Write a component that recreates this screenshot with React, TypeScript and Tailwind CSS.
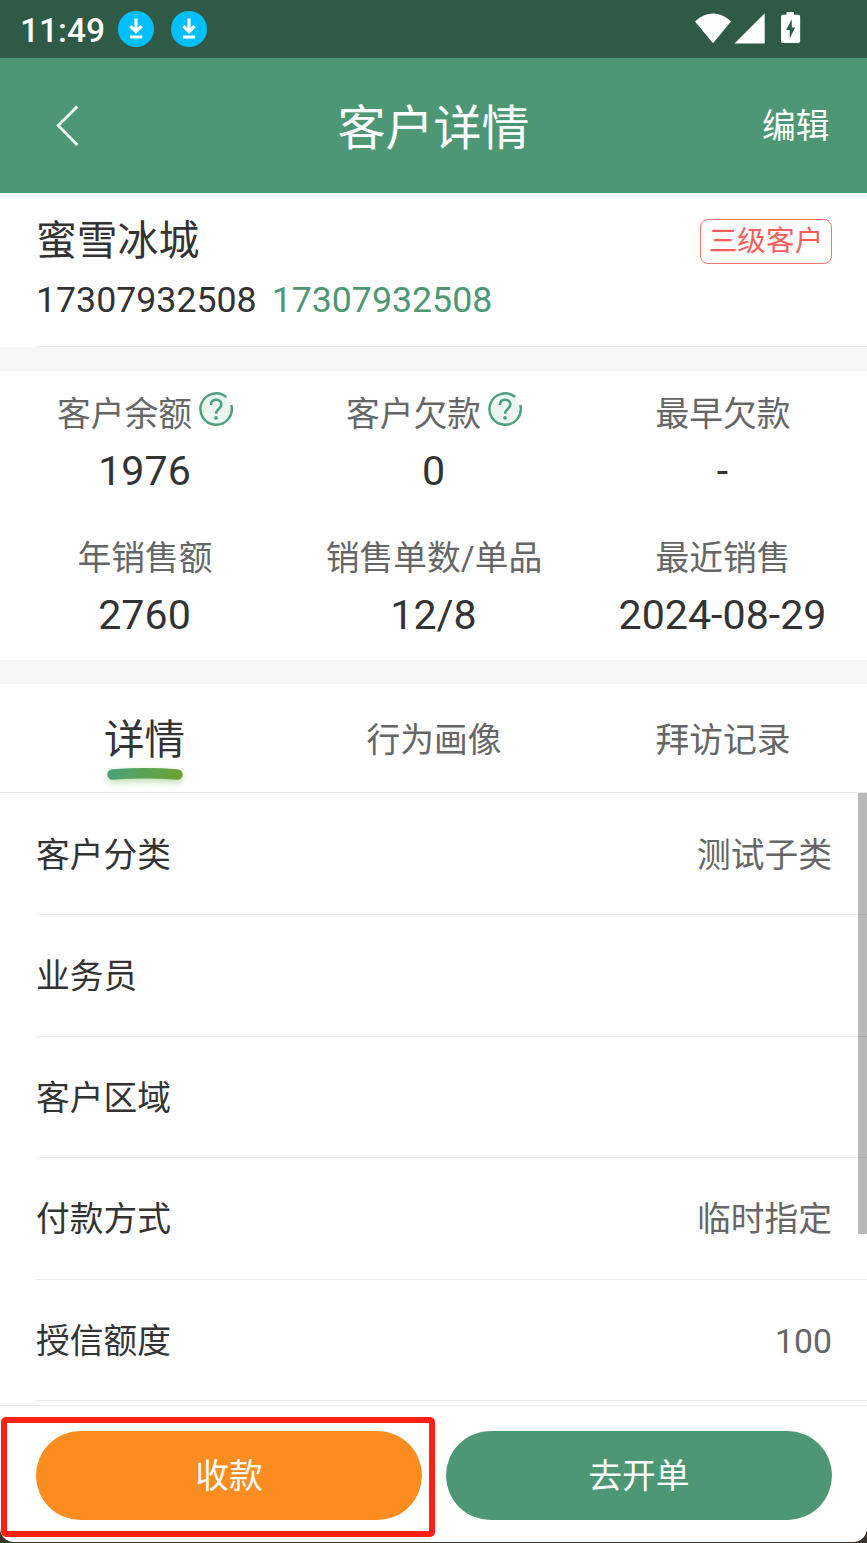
import type { ReactNode } from "react";

interface Stat { label: string; value: string; help?: boolean }
interface Row { label: string; value?: string }

const STATS: Stat[] = [
  { label: "客户余额", value: "1976", help: true },
  { label: "客户欠款", value: "0", help: true },
  { label: "最早欠款", value: "-" },
  { label: "年销售额", value: "2760" },
  { label: "销售单数/单品", value: "12/8" },
  { label: "最近销售", value: "2024-08-29" },
];

const TABS = ["详情", "行为画像", "拜访记录"];

const ROWS: Row[] = [
  { label: "客户分类", value: "测试子类" },
  { label: "业务员" },
  { label: "客户区域" },
  { label: "付款方式", value: "临时指定" },
  { label: "授信额度", value: "100" },
];

function DownloadBadge() {
  return (
    <svg viewBox="0 0 36 36" className="h-9 w-9">
      <circle cx="18" cy="18" r="18" fill="#00bfff" />
      <path d="M18 7.5V20M12.4 15.2l5.6 5.6 5.6-5.6" fill="none" stroke="#fff" strokeWidth="3.2" />
      <path d="M12 24.5h12.2v3H12z" fill="#fff" />
    </svg>
  );
}

function HelpIcon() {
  return (
    <svg viewBox="0 0 34 34" className="-mt-3.5 ml-[7px] h-[34px] w-[34px]">
      <circle cx="17" cy="17" r="15.5" fill="#ebf6f1" />
      <path d="M27.2 5A15.700 15.700 0 1 0 32.300 13" fill="none" stroke="#4e9f7b" strokeWidth="2.4" />
      <path
        d="M12 12.900c0-3.200 2.100-5.200 5.200-5.200s5.200 1.900 5.200 4.800c0 4.100-5.300 4.400-5.300 9.200"
        fill="none"
        stroke="#4e9f7b"
        strokeWidth="2.500"
      />
      <circle cx="17" cy="25.800" r="1.900" fill="#4e9f7b" />
    </svg>
  );
}

function StatusBar() {
  return (
    <div className="flex h-[58px] items-center bg-[#2f5b46] pl-5 text-white">
      <span className="w-[85px] pt-[3px] text-[33.5px] leading-[58px] font-medium">11:49</span>
      <div className="ml-[13px] flex gap-[17px]">
        <DownloadBadge />
        <DownloadBadge />
      </div>
      <svg viewBox="0 0 108 34" className="mr-[64px] ml-auto h-[34px] w-[108px]" fill="#fff">
        <path d="M0 9.6C10.8-1.2 25.2-1.2 36 9.6L18 31.2z" />
        <path d="M39.5 31.5 69.7 1.3V31.5z" />
        <path
          fillRule="evenodd"
          d="M91.5 0h7.5v2.8h4.2a2 2 0 0 1 2 2V29a2 2 0 0 1-2 2H88a2 2 0 0 1-2-2V4.800a2 2 0 0 1 2-2h3.500zM96.800 7.200 91 18h3.700v8.800L100 15.500h-3.200z"
        />
      </svg>
    </div>
  );
}

function Header() {
  return (
    <header className="grid h-[135px] grid-cols-3 items-center bg-[#4e9775] text-white">
      <svg viewBox="0 0 24 42" className="ml-[56px] h-[42px] w-6" fill="none" stroke="#fff" strokeOpacity=".9" strokeWidth="3">
        <path d="M21.300 1.500 2.300 20.500 21.300 40" />
      </svg>
      <h1 className="pt-[7px] text-center text-[48px] leading-[60px]">客户详情</h1>
      <button type="button" className="pt-0.5 pr-[37.500px] text-right text-[33.75px] leading-[44px]">编辑</button>
    </header>
  );
}

function ActionButton({ className, children }: { className: string; children: ReactNode }) {
  return (
    <button type="button" className={`h-[89px] flex-1 rounded-full pt-1 text-[33.75px] text-white ${className}`}>
      {children}
    </button>
  );
}

export default function App() {
  return (
    <div className="h-[1543px] w-[867px] overflow-hidden bg-[#39332b] font-['Roboto','Noto_Sans_CJK_SC',sans-serif] text-[#333]">
      <div className="flex h-[1542px] flex-col overflow-hidden rounded-b-[14px] bg-white">
        <StatusBar />
        <Header />

        <section className="ml-9 h-[154px] shrink-0 border-b border-[#e8e8e8] pt-5 pr-[35px]">
          <div className="flex justify-between">
            <h2 className="text-[40.8px] leading-[56px]">蜜雪冰城</h2>
            <span className="mt-1.5 h-[45px] w-[132px] rounded-lg border border-[#fb7570] text-center text-[28.7px] leading-[43px] text-[#f95f5a]">
              三级客户
            </span>
          </div>
          <p className="flex gap-[15px] text-[35.7px] leading-[63px]">
            <span>17307932508</span>
            <span className="text-[#4e9775]">17307932508</span>
          </p>
        </section>
        <div className="h-6 shrink-0 bg-[#f7f7f7]" />

        <section className="grid h-[289px] shrink-0 grid-cols-3 grid-rows-[144px_145px] text-center">
          {STATS.map((stat) => (
            <div key={stat.label} className="pt-[17px]">
              <div className="flex h-[50px] items-center justify-center pt-[5px] pl-px text-[33.75px] text-[#666]">
                {stat.label}
                {stat.help && <HelpIcon />}
              </div>
              <div className="text-[41.2px] leading-[66px]">{stat.value}</div>
            </div>
          ))}
        </section>
        <div className="h-6 shrink-0 bg-[#f7f7f7]" />

        <nav className="grid h-[109px] shrink-0 grid-cols-3 border-b border-[#e8e8e8] text-center leading-[113px]">
          {TABS.map((tab, index) => (
            <div key={tab} className={index === 0 ? "relative h-[108px] text-[40.5px]" : "h-[108px] pl-px text-[33.75px] text-[#666]"}>
              {tab}
              {index === 0 && (
                <svg viewBox="0 0 100 32" className="absolute bottom-0 left-1/2 h-8 w-[100px] -translate-x-1/2">
                  <defs>
                    <linearGradient id="tab" x1="0" x2="1" y1="0" y2="0">
                      <stop stopColor="#4aa27b" />
                      <stop offset="1" stopColor="#6ba331" />
                    </linearGradient>
                  </defs>
                  <path
                    className="drop-shadow-[0_3px_3px_rgba(107,180,70,0.45)]"
                    d="M17.500 9.300Q50 6.800 82.500 9.300A5 5 0 0 1 82.500 19.700Q50 17.500 17.500 19.700A5 5 0 0 1 17.500 9.300z"
                    fill="url(#tab)"
                  />
                </svg>
              )}
            </div>
          ))}
        </nav>

        <div className="relative h-[612px] shrink-0 overflow-hidden pt-[0.5px] text-[33.75px]">
          {ROWS.map((row) => (
            <div
              key={row.label}
              className="ml-9 flex h-[121.5px] items-center justify-between border-b border-[#ececec] pt-[5px] pr-[35px]"
            >
              <span>{row.label}</span>
              <span className="text-[#666]">{row.value}</span>
            </div>
          ))}
          <div className="absolute top-0 right-0 h-[441px] w-[9px] bg-black/28" />
        </div>

        <footer className="relative flex h-[137px] shrink-0 gap-6 border-t border-[#ececec] pt-[25px] pr-[35px] pl-9">
          <ActionButton className="bg-[#fa8c20]">收款</ActionButton>
          <ActionButton className="bg-[#4e9775]">去开单</ActionButton>
          <div className="absolute top-[11px] left-px h-[120px] w-[434px] rounded-[5px] border-6 border-[#ff2013]" />
        </footer>
      </div>
    </div>
  );
}
